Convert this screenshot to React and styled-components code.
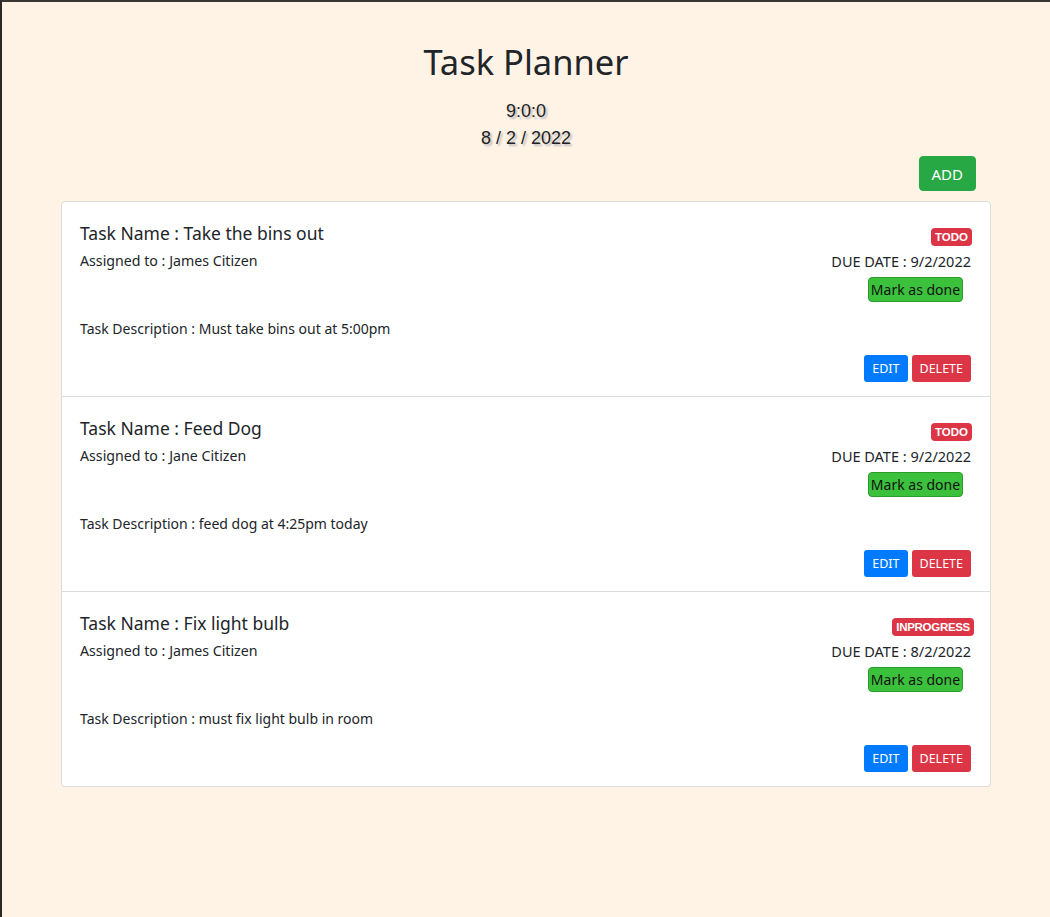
import React from "react";
import styled, { createGlobalStyle } from "styled-components";

const Global = createGlobalStyle`
  html, body { margin: 0; padding: 0; }
  body {
    background: #fff3e6;
    font-family: "Noto Sans", "Open Sans", sans-serif;
    color: #212529;
    min-height: 917px;
    box-sizing: border-box;
    border-top: 2px solid #3a3633;
    border-left: 2px solid #2b2826;
  }
  * { box-sizing: border-box; }
`;

const Page = styled.div`
  width: 930px;
  margin: 0 auto;
  padding-top: 36px;
  display: flex;
  flex-direction: column;
  align-items: stretch;
`;

const Title = styled.h1`
  margin: 0;
  text-align: center;
  font-size: 34.5px;
  font-weight: 400;
  line-height: 48px;
  color: #212529;
`;

const Clock = styled.div`
  margin-top: 12px;
  text-align: center;
  font-family: "Liberation Sans", Arial, sans-serif;
  font-size: 18px;
  line-height: 27px;
  color: #222;
  text-shadow: 2px 2px 2px #b9b9b9;
`;

const Toolbar = styled.div`
  display: flex;
  justify-content: flex-end;
  padding-right: 15px;
  margin-top: 4px;
`;

const AddButton = styled.button`
  height: 35px;
  padding: 0 12px;
  border: 1px solid #28a745;
  border-radius: 4px;
  background: #28a745;
  color: #fff;
  font-family: inherit;
  font-size: 15px;
  cursor: pointer;
`;

const Card = styled.div`
  margin-top: 10px;
  background: #fff;
  border: 1px solid #dcdcdc;
  border-radius: 4px;
  display: flex;
  flex-direction: column;
`;

const Item = styled.div`
  padding: 19px 19px 14px 18px;
  border-top: ${(p) => (p.$first ? "none" : "1px solid #dcdcdc")};
  display: flex;
  flex-direction: column;
`;

const HeadRow = styled.div`
  display: flex;
  justify-content: space-between;
  align-items: flex-start;
  height: 24px;
`;

const Row = styled.div`
  display: flex;
  justify-content: space-between;
  align-items: center;
  margin-top: 5px;
`;

const TaskName = styled.div`
  font-size: 17.5px;
  line-height: 24px;
`;

const Badge = styled.span`
  margin-top: 7px;
  margin-right: ${(p) => (p.$wide ? "-3px" : "-1px")};
  background: #dc3545;
  color: #fff;
  font-family: "Liberation Sans", Arial, sans-serif;
  font-weight: 700;
  font-size: 11.5px;
  line-height: 18px;
  padding: 0 4px;
  border-radius: 4px;
  letter-spacing: ${(p) => (p.$wide ? "-0.3px" : "0")};
`;

const SmallText = styled.div`
  font-size: 14.2px;
  line-height: 22px;
`;

const DueText = styled.div`
  font-size: 14.5px;
  line-height: 22px;
`;

const MarkRow = styled.div`
  display: flex;
  justify-content: flex-end;
  padding-right: 8px;
  margin-top: 5px;
`;

const MarkButton = styled.button`
  height: 25px;
  width: 95px;
  padding: 0;
  background: #3cc13c;
  border: 1px solid #2d9a2d;
  border-radius: 4px;
  color: #111;
  font-family: inherit;
  font-size: 14px;
  cursor: pointer;
`;

const Description = styled.div`
  margin-top: 16px;
  font-size: 14px;
  line-height: 22px;
`;

const Actions = styled.div`
  display: flex;
  justify-content: flex-end;
  gap: 4px;
  margin-top: 15px;
`;

const SmallButton = styled.button`
  height: 27px;
  padding: 0 8px;
  border: none;
  border-radius: 3px;
  background: ${(p) => (p.$variant === "danger" ? "#dc3545" : "#007bff")};
  color: #fff;
  font-family: inherit;
  font-size: 12.5px;
  cursor: pointer;
`;

const tasks = [
  {
    name: "Take the bins out",
    assigned: "James Citizen",
    status: "TODO",
    due: "9/2/2022",
    desc: "Must take bins out at 5:00pm",
  },
  {
    name: "Feed Dog",
    assigned: "Jane Citizen",
    status: "TODO",
    due: "9/2/2022",
    desc: "feed dog at 4:25pm today",
  },
  {
    name: "Fix light bulb",
    assigned: "James Citizen",
    status: "INPROGRESS",
    due: "8/2/2022",
    desc: "must fix light bulb in room",
  },
];

export default function App() {
  return (
    <>
      <Global />
      <Page>
        <Title>Task Planner</Title>
        <Clock>
          9:0:0
          <br />8 / 2 / 2022
        </Clock>
        <Toolbar>
          <AddButton>ADD</AddButton>
        </Toolbar>
        <Card>
          {tasks.map((t, i) => (
            <Item key={i} $first={i === 0}>
              <HeadRow>
                <TaskName>Task Name : {t.name}</TaskName>
                <Badge $wide={t.status.length > 4}>{t.status}</Badge>
              </HeadRow>
              <Row>
                <SmallText>Assigned to : {t.assigned}</SmallText>
                <DueText>DUE DATE : {t.due}</DueText>
              </Row>
              <MarkRow>
                <MarkButton>Mark as done</MarkButton>
              </MarkRow>
              <Description>Task Description : {t.desc}</Description>
              <Actions>
                <SmallButton>EDIT</SmallButton>
                <SmallButton $variant="danger">DELETE</SmallButton>
              </Actions>
            </Item>
          ))}
        </Card>
      </Page>
    </>
  );
}
